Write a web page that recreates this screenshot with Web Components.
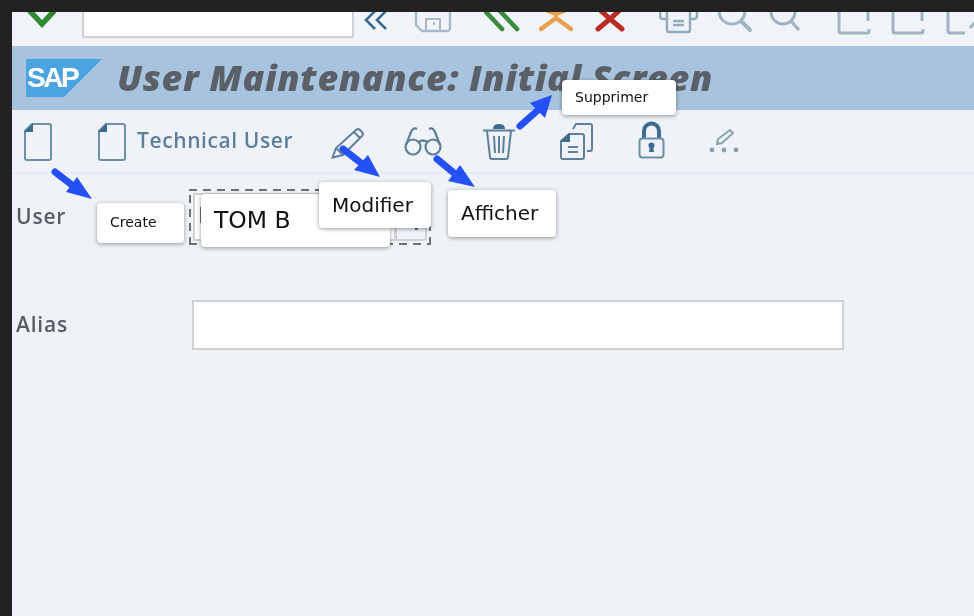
<!DOCTYPE html>
<html lang="en">
<head>
<meta charset="utf-8">
<title>User Maintenance: Initial Screen</title>
<style>
  html, body { margin: 0; height: 100%; overflow: hidden; background: #222222; }
</style>
</head>
<body>
<sap-screen>
  <sap-system-bar>
    <sap-icon name="check" style="margin-left:14px"></sap-icon>
    <sap-command-field style="margin-left:26px"></sap-command-field>
    <sap-icon name="back" style="margin-left:8px"></sap-icon>
    <sap-icon name="save" style="margin-left:24px"></sap-icon>
    <sap-icon name="greenBack" style="margin-left:32px"></sap-icon>
    <sap-icon name="exit" style="margin-left:14px"></sap-icon>
    <sap-icon name="cancel" style="margin-left:15px"></sap-icon>
    <sap-icon name="print" style="margin-left:30px"></sap-icon>
    <sap-icon name="find" style="margin-left:16px"></sap-icon>
    <sap-icon name="findNext" style="margin-left:14px"></sap-icon>
    <sap-icon name="pageA" style="margin-left:34px"></sap-icon>
    <sap-icon name="pageA" style="margin-left:20px"></sap-icon>
    <sap-icon name="pageB" style="margin-left:20px"></sap-icon>
  </sap-system-bar>

  <sap-title-bar>User Maintenance: Initial Screen</sap-title-bar>

  <sap-app-toolbar>
    <sap-icon name="doc" style="margin-left:11px"></sap-icon>
    <sap-icon name="doc" style="margin-left:44px"></sap-icon>
    <sap-tool-label>Technical User</sap-tool-label>
    <sap-icon name="pen" style="margin-left:38px"></sap-icon>
    <sap-icon name="glasses" style="margin-left:39px"></sap-icon>
    <sap-icon name="trash" style="margin-left:38px"></sap-icon>
    <sap-icon name="copy" style="margin-left:44px"></sap-icon>
    <sap-icon name="lock" style="margin-left:42px"></sap-icon>
    <sap-icon name="massPen" style="margin-left:41px"></sap-icon>
  </sap-app-toolbar>

  <sap-form>
    <sap-form-label>User</sap-form-label>
    <sap-user-field></sap-user-field>
    <sap-form-label>Alias</sap-form-label>
    <sap-text-field></sap-text-field>
  </sap-form>

  <sap-arrows></sap-arrows>
  <sap-note style="left:97px;top:203px;width:87px;height:40px;font-size:14px">Create</sap-note>
  <sap-note style="left:201px;top:194px;width:189px;height:53px;font-size:23.5px">TOM B</sap-note>
  <sap-note style="left:319px;top:182px;width:112px;height:46px;font-size:20px;padding-bottom:0">Modifier</sap-note>
  <sap-note style="left:448px;top:190px;width:108px;height:47px;font-size:20px">Afficher</sap-note>
  <sap-note style="left:562px;top:80px;width:114px;height:35px;font-size:14px">Supprimer</sap-note>
</sap-screen>

<script>
// icon artwork, width plus inner svg. System bar icons are cut off by the top of the screen.
const LINE = '#6f8ea8';
const DARK = '#3f6b8f';
const PALE = '#9fb3c4';

const ICONS = {
  check: [30, 34, `<path d="M3 -2L16 12L29 -2" fill="none" stroke="#2f8a32" stroke-width="5.5"/>`],
  back: [28, 34, `<path d="M13 -1L4 8L13 17M24 -1L15 8L24 17" fill="none" stroke="${DARK}" stroke-width="2.6"/>`],
  save: [38, 34, `<path d="M2 -3V13L8 19H33a3 3 0 0 0 3-3V-3" fill="none" stroke="#a9b9c9" stroke-width="2.4"/>
    <path d="M12 19V7H26V19M20 10v3" fill="none" stroke="#a9b9c9" stroke-width="2"/>`],
  greenBack: [38, 34, `<path d="M1 -1L18 17M16 -1L33 17" fill="none" stroke="#3b8b3d" stroke-width="4.6" stroke-linecap="round"/>`],
  exit: [40, 34, `<path d="M5 17L20 6L35 17" fill="none" stroke="#e8a04a" stroke-width="4.4" stroke-linecap="round"/>
    <path d="M8 -3L20 2L32 -3" fill="none" stroke="#e8a04a" stroke-width="4.4"/>`],
  cancel: [38, 34, `<path d="M8 -3L19 7L7 17M30 -3L19 7L31 17" fill="none" stroke="#b92b23" stroke-width="5" stroke-linecap="round"/>`],
  print: [40, 34, `<path d="M1 -2V4a3 3 0 0 0 3 3H8M38 -2V4a3 3 0 0 1-3 3H31" fill="none" stroke="#93a9bc" stroke-width="2.5"/>
    <path d="M8 -2V18a2 2 0 0 0 2 2H29a2 2 0 0 0 2-2V-2M14 9H25M14 13H25" fill="none" stroke="#93a9bc" stroke-width="2.4"/>`],
  find: [38, 34, `<circle cx="17" cy="-1" r="13" fill="none" stroke="${PALE}" stroke-width="3"/>
    <path d="M26 9L35 18" stroke="${PALE}" stroke-width="4" stroke-linecap="round"/>`],
  findNext: [36, 34, `<circle cx="16" cy="0" r="12" fill="none" stroke="${PALE}" stroke-width="3"/>
    <path d="M24 9L31 17" stroke="${PALE}" stroke-width="3.4" stroke-linecap="round"/>`],
  pageA: [34, 34, `<path d="M2 -2V19a2 2 0 0 0 2 2H30a2 2 0 0 0 2-2V17M31 -2V9" fill="none" stroke="${PALE}" stroke-width="3"/>`],
  pageB: [32, 34, `<path d="M3 -2V19a2 2 0 0 0 2 2H20M29 11l-4 5" fill="none" stroke="${PALE}" stroke-width="3"/>`],

  doc: [30, 40, `<path d="M9 3H26a2 2 0 0 1 2 2V37a2 2 0 0 1-2 2H4a2 2 0 0 1-2-2V10Z" fill="none" stroke="${LINE}" stroke-width="2"/>
    <path d="M10 2L1 11H10Z" fill="${DARK}"/>`],
  pen: [34, 40, `<path d="M1.5 36.5L5 27L25 9a3 3 0 0 1 4 0l2 2a3 3 0 0 1 0 4L12 34ZM23 11l6 6M5 27l7 7" fill="none" stroke="#5f7f9a" stroke-width="2"/>`],
  glasses: [40, 40, `<g fill="none" stroke="#5f7f9a" stroke-width="2.2"><circle cx="9" cy="26" r="7.5"/><circle cx="29" cy="26" r="7.5"/>
    <path d="M15 21q4-3 8 0M2 24L7 11Q9 6 13 8M36 24L31 11Q29 6 25 8"/></g>`],
  trash: [34, 40, `<path d="M1 9.5H33M5 10L8 36a2 2 0 0 0 2 2H24a2 2 0 0 0 2-2L29 10M12 15L13 32M17 15V32M22 15L21 32" fill="none" stroke="#5f7f9a" stroke-width="2"/>
    <path d="M11 8q0-5 6-5t6 5Z" fill="${DARK}"/>`],
  copy: [36, 40, `<path d="M9 13H22a2 2 0 0 1 2 2V36a2 2 0 0 1-2 2H3a2 2 0 0 1-2-2V20ZM8 26H18M8 31H18M13 8L16 3H30a2 2 0 0 1 2 2V28a2 2 0 0 1-2 2H27" fill="none" stroke="#5f7f9a" stroke-width="2"/>
    <path d="M10 12L0 21H10Z" fill="${DARK}"/>`],
  lock: [28, 40, `<path d="M6 18V10a7.5 7.5 0 0 1 15 0V18" fill="none" stroke="${DARK}" stroke-width="4"/>
    <rect x="1.5" y="17.5" width="24" height="19" rx="3" fill="#eef2f8" stroke="${LINE}" stroke-width="2"/>
    <circle cx="13.5" cy="24.5" r="3" fill="${DARK}"/><path d="M12 25h3l1 6h-5Z" fill="${DARK}"/>`],
  massPen: [36, 40, `<path d="M10 23L11 18L23 9L26 12L15 22Z" fill="none" stroke="#8aa0b5" stroke-width="2"/>
    <g fill="#8aa0b5"><circle cx="5" cy="29" r="2.4"/><circle cx="17" cy="29" r="2.4"/><circle cx="29" cy="29" r="2.4"/></g>`],
};

function shadow(host, html) {
  host.attachShadow({ mode: 'open' }).innerHTML = html;
}

class SapIcon extends HTMLElement {
  connectedCallback() {
    const [width, height, art] = ICONS[this.getAttribute('name')];
    shadow(this, `
      <style>:host { display: block; flex: none; } svg { display: block; overflow: hidden; }</style>
      <svg width="${width}" height="${height}" viewBox="0 0 ${width} ${height}">${art}</svg>`);
  }
}

class SapScreen extends HTMLElement {
  constructor() {
    super();
    shadow(this, `
      <style>
        :host {
          display: flex; flex-direction: column; box-sizing: border-box; position: relative;
          width: 974px; height: 616px; padding: 12px 0 0 12px; overflow: hidden;
          background: #222222; font-family: "Open Sans", "DejaVu Sans", sans-serif;
          filter: blur(0.4px); /* the reference is an upscaled, soft photo */
        }
        .panel { flex: 1; display: flex; flex-direction: column; background: #eff3f8; }
      </style>
      <div class="panel"><slot></slot></div>`);
  }
}

class SapSystemBar extends HTMLElement {
  constructor() {
    super();
    shadow(this, `
      <style>:host { display: flex; height: 34px; overflow: hidden; background: #f0f4f9; }</style>
      <slot></slot>`);
  }
}

class SapCommandField extends HTMLElement {
  constructor() {
    super();
    shadow(this, `
      <style>
        :host {
          display: block; flex: none; box-sizing: border-box; width: 272px; height: 26px;
          background: #ffffff; border: 2px solid #cfd1d3; border-top: 0;
        }
      </style>`);
  }
}

class SapTitleBar extends HTMLElement {
  constructor() {
    super();
    shadow(this, `
      <style>
        :host {
          display: flex; align-items: center; box-sizing: border-box; height: 64px; padding-left: 14px;
          background: #a8c3dd; border-bottom: 1px solid #a3bdd8;
        }
        .logo { position: relative; width: 76px; height: 38px; flex: none; }
        svg { position: absolute; inset: 0; }
        .sap {
          position: relative; display: block; padding: 4px 0 0 1px; color: #ffffff;
          font: bold 28px/30px "Liberation Sans", sans-serif; letter-spacing: -2.4px;
        }
        .text {
          margin-left: 15px; color: #5b6068; white-space: nowrap;
          font: italic 800 36px/44px "Open Sans", sans-serif; letter-spacing: 0.6px;
        }
      </style>
      <div class="logo">
        <svg width="76" height="38" viewBox="0 0 76 38"><path d="M0 0H76L38 38H0Z" fill="#4ba3e0"/></svg>
        <span class="sap">SAP</span>
      </div>
      <span class="text"><slot></slot></span>`);
  }
}

class SapAppToolbar extends HTMLElement {
  constructor() {
    super();
    shadow(this, `
      <style>
        :host {
          display: flex; align-items: center; box-sizing: border-box; height: 64px;
          padding-bottom: 1px; border-bottom: 2px solid #e3ebf5;
        }
      </style>
      <slot></slot>`);
  }
}

class SapToolLabel extends HTMLElement {
  constructor() {
    super();
    shadow(this, `
      <style>
        :host {
          display: block; margin: 0 0 2px 10px; color: #5f7f9b; white-space: nowrap;
          font: 600 21px/28px "Open Sans", sans-serif; letter-spacing: 0.6px;
        }
      </style>
      <slot></slot>`);
  }
}

class SapForm extends HTMLElement {
  constructor() {
    super();
    shadow(this, `
      <style>
        :host {
          display: grid; grid-template-columns: 173px 1fr; row-gap: 55px; align-items: center;
          padding: 15px 0 0 4px;
        }
      </style>
      <slot></slot>`);
  }
}

class SapFormLabel extends HTMLElement {
  constructor() {
    super();
    shadow(this, `
      <style>
        :host {
          display: block; padding-bottom: 2px; color: #565d64;
          font: 600 21px/28px "Open Sans", sans-serif; letter-spacing: 0.8px;
        }
      </style>
      <slot></slot>`);
  }
}

class SapTextField extends HTMLElement {
  constructor() {
    super();
    shadow(this, `
      <style>
        :host {
          display: block; box-sizing: border-box; width: 652px; height: 50px; margin-left: 3px;
          background: #ffffff; border: 2px solid #cfd1d3;
        }
      </style>`);
  }
}

// input with value help button, inside the dashed focus frame
class SapUserField extends HTMLElement {
  constructor() {
    super();
    shadow(this, `
      <style>
        :host {
          --dash: #6d7075;
          display: flex; box-sizing: border-box; width: 242px; height: 56px; padding: 4px;
          background:
            repeating-linear-gradient(90deg, var(--dash) 0 8px, transparent 8px 14px) top / 100% 2px no-repeat,
            repeating-linear-gradient(90deg, var(--dash) 0 8px, transparent 8px 14px) bottom / 100% 2px no-repeat,
            repeating-linear-gradient(0deg, var(--dash) 0 8px, transparent 8px 14px) left / 2px 100% no-repeat,
            repeating-linear-gradient(0deg, var(--dash) 0 8px, transparent 8px 14px) right / 2px 100% no-repeat;
        }
        .input { flex: 1; background: #ffffff; border: 2px solid #cfd1d3; position: relative; }
        .input::before { content: ""; position: absolute; left: 5px; top: 12px; width: 2px; height: 16px; background: #6d7075; }
        .help {
          width: 32px; flex: none; box-sizing: border-box; margin-left: -1px; position: relative;
          background: #eff3f8; border: 2px solid #cfd1d3; border-radius: 0 0 3px 3px;
        }
        .help::after { content: ""; position: absolute; right: 7px; bottom: 9px; width: 3px; height: 3px; background: #55708a; }
      </style>
      <div class="input"></div>
      <div class="help"></div>`);
  }
}

class SapNote extends HTMLElement {
  constructor() {
    super();
    shadow(this, `
      <style>
        :host {
          position: absolute; display: flex; align-items: center; box-sizing: border-box; padding: 0 0 2px 13px;
          background: #ffffff; border-radius: 4px; box-shadow: 0 1px 4px rgba(0, 0, 0, 0.4);
          color: #111111; font-family: "DejaVu Sans", sans-serif; white-space: nowrap;
        }
      </style>
      <slot></slot>`);
  }
}

class SapArrows extends HTMLElement {
  constructor() {
    super();
    const arrows = [
      [55, 172, 72, 185, 92, 199, 77, 177, 66, 192],
      [343, 149, 361, 163, 380, 177, 368, 155, 354, 170],
      [437, 159, 454, 173, 475, 187, 460, 165, 448, 181],
      [520, 126, 538, 110, 552, 95, 530, 103, 545, 118],
    ];
    const art = arrows.map(([x1, y1, x2, y2, tx, ty, ax, ay, bx, by]) => `
      <path d="M${x1} ${y1}L${x2} ${y2}" stroke="#2450f6" stroke-width="7" stroke-linecap="round"/>
      <path d="M${tx} ${ty}L${ax} ${ay}L${bx} ${by}Z" fill="#2450f6"/>`).join('');
    shadow(this, `
      <style>:host { position: absolute; inset: 0; display: block; } svg { display: block; }</style>
      <svg width="974" height="616" viewBox="0 0 974 616">${art}</svg>`);
  }
}

customElements.define('sap-icon', SapIcon);
customElements.define('sap-screen', SapScreen);
customElements.define('sap-system-bar', SapSystemBar);
customElements.define('sap-command-field', SapCommandField);
customElements.define('sap-title-bar', SapTitleBar);
customElements.define('sap-app-toolbar', SapAppToolbar);
customElements.define('sap-tool-label', SapToolLabel);
customElements.define('sap-form', SapForm);
customElements.define('sap-form-label', SapFormLabel);
customElements.define('sap-text-field', SapTextField);
customElements.define('sap-user-field', SapUserField);
customElements.define('sap-note', SapNote);
customElements.define('sap-arrows', SapArrows);
</script>
</body>
</html>
